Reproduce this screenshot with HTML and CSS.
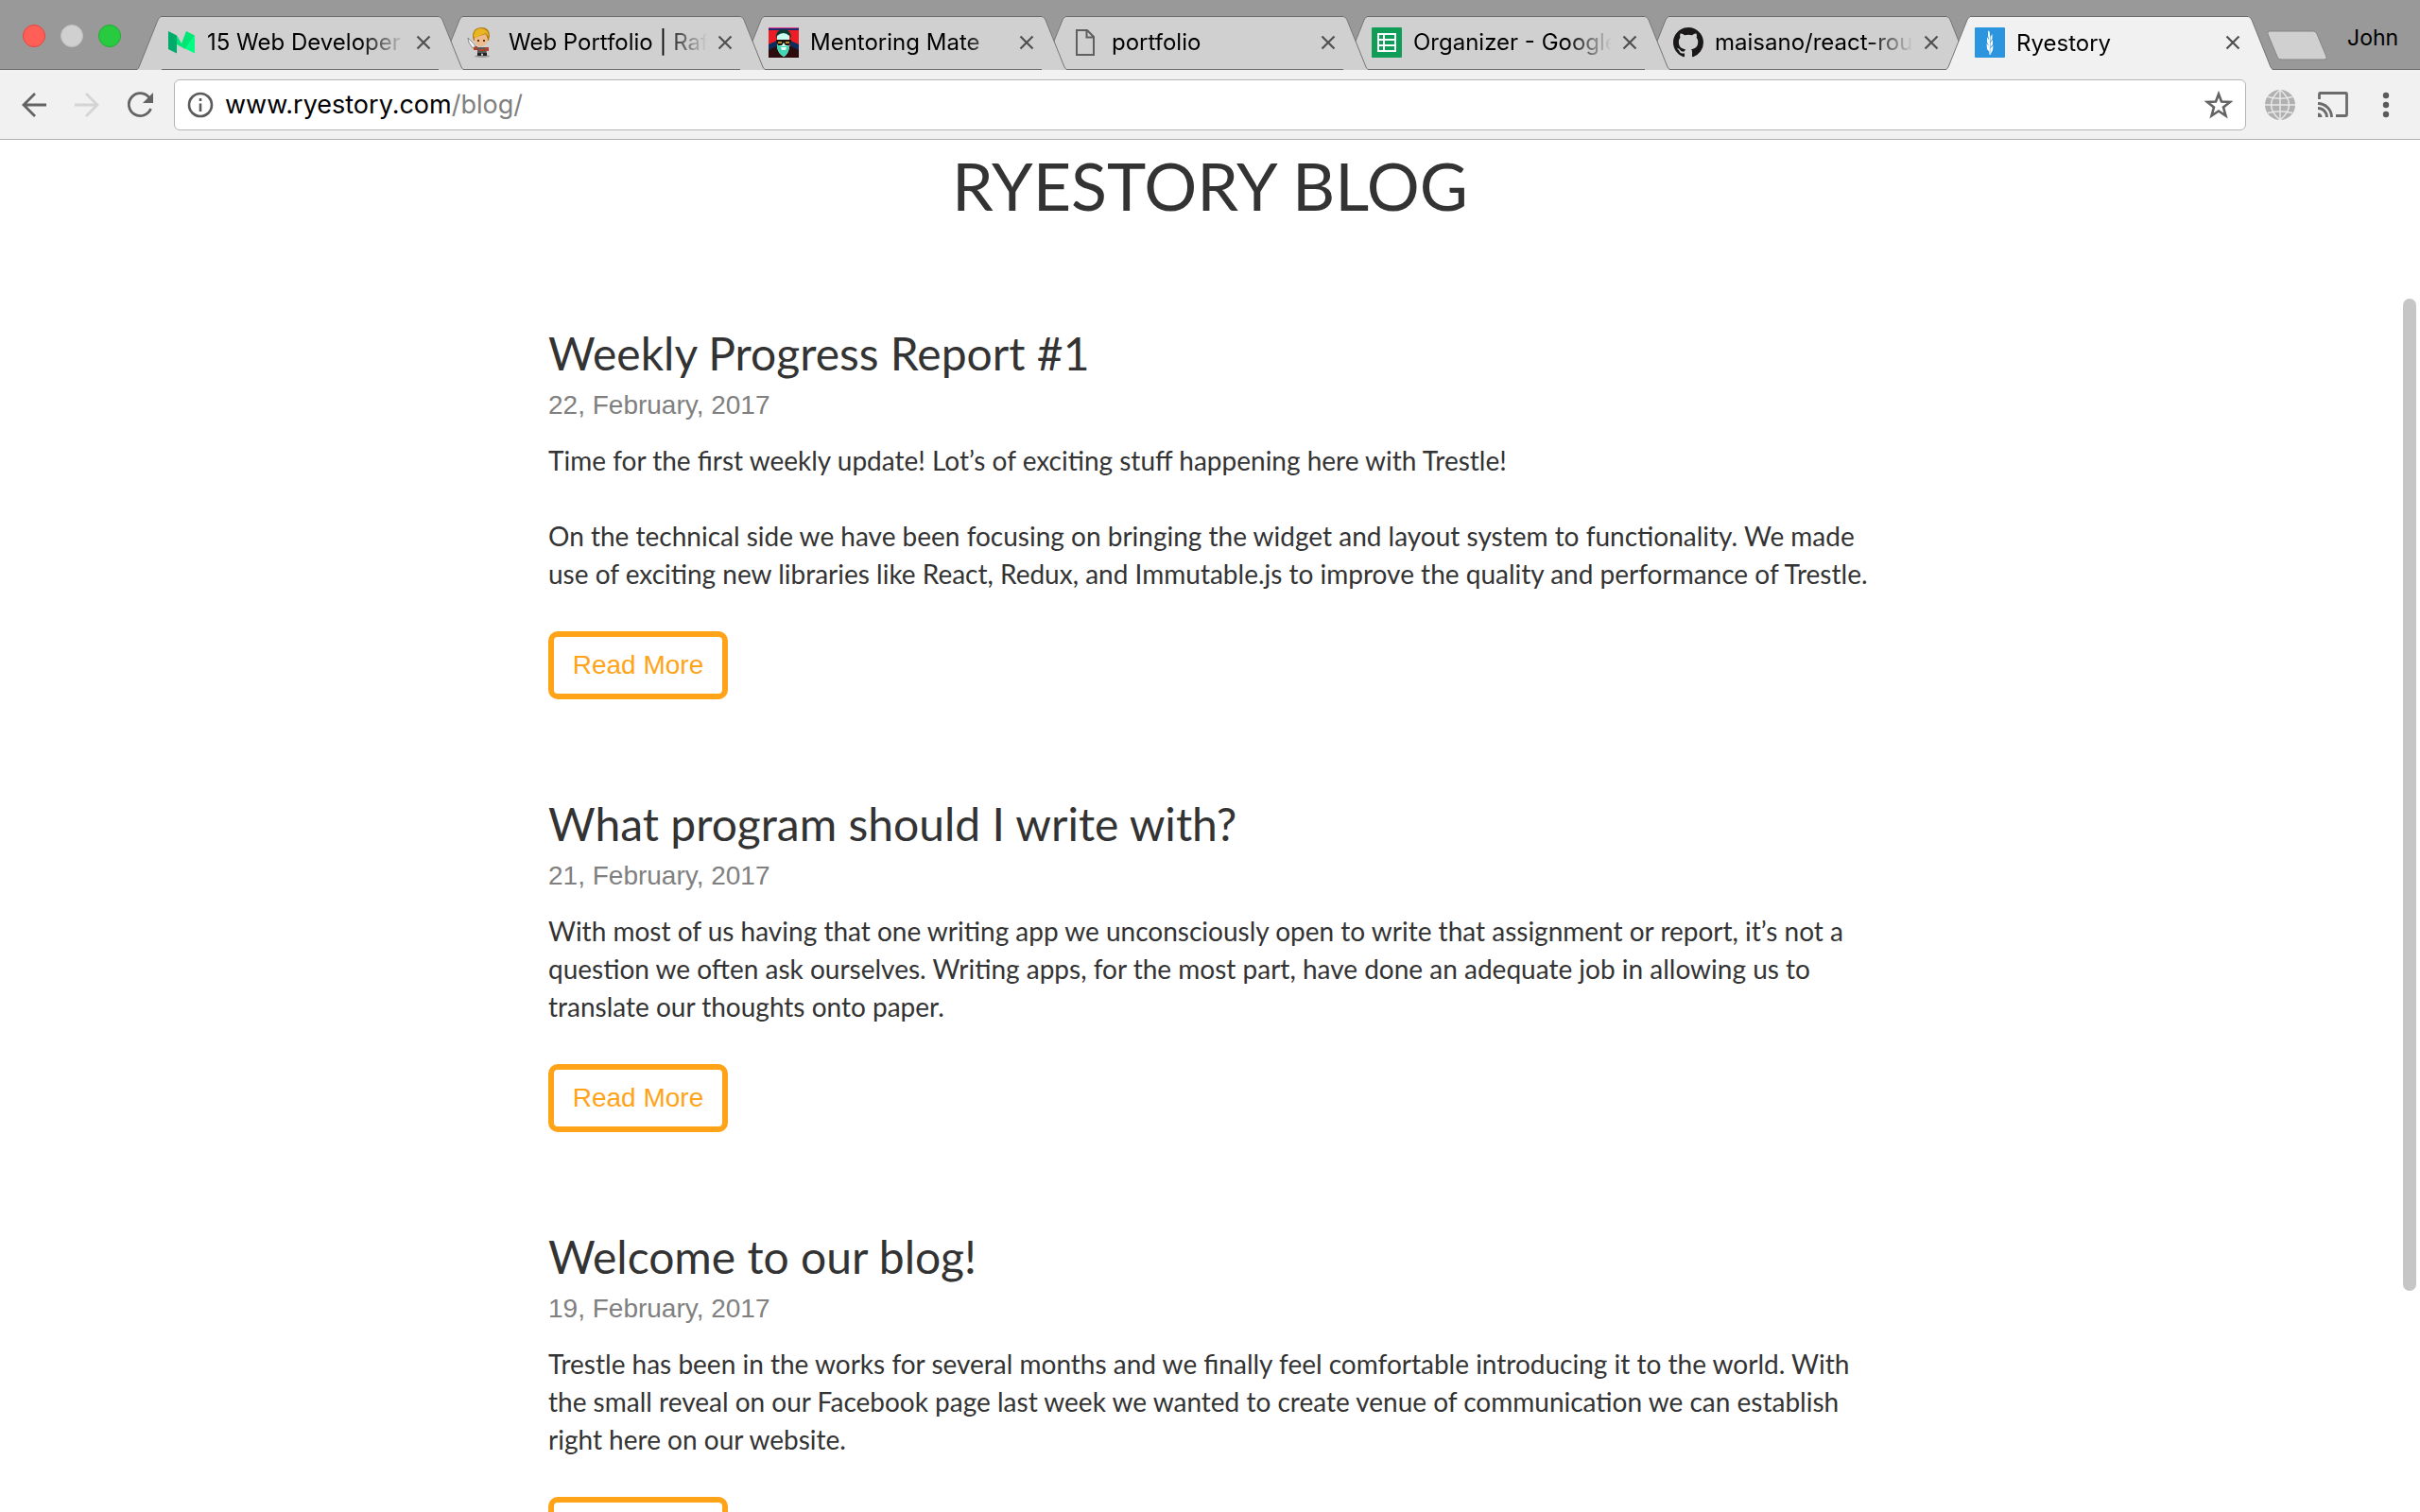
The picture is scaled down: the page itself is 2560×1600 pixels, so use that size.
FILE: index.html
```html
<!DOCTYPE html>
<html lang="en">
<head>
<meta charset="utf-8">
<title>Ryestory</title>
<link rel="stylesheet" href="styles.css">
</head>
<body>
<svg class="defs" aria-hidden="true">
  <defs>
    <symbol id="slant-left" viewBox="0 0 26 57">
      <path class="tab-fill" d="M0 57L2 54L22 4Q24 0 26 0V57Z"/>
      <path class="tab-line" d="M0 56.500L2 54L22 4Q23.500 .5 26 .5"/>
    </symbol>
    <symbol id="slant-right" viewBox="0 0 26 57">
      <path class="tab-fill" d="M26 57L24 54L4 4Q2 0 0 0V57Z"/>
      <path class="tab-line" d="M26 56.500L24 54L4 4Q2.500 .5 0 .5"/>
    </symbol>
    <symbol id="close" viewBox="0 0 16 16">
      <path d="M1.500 1.500L14.500 14.500M14.500 1.500L1.500 14.500" fill="none" stroke="#505050" stroke-width="2.200"/>
    </symbol>
  </defs>
</svg>
<div class="window">
  <header class="strip">
    <div class="lights">
      <button class="light light-close" aria-label="Close window"></button>
      <button class="light light-min" aria-label="Minimise"></button>
      <button class="light light-zoom" aria-label="Zoom"></button>
    </div>
    <nav class="tabs" aria-label="Tabs">
      <div class="tab">
        <svg class="slant"><use href="#slant-left"/></svg>
        <div class="tab-body">
          <svg class="favicon" viewBox="0 0 32 32"><path fill="#00ab6b" d="M3 4L12 8.500V27.500L3 23Z"/><path fill="#00e776" d="M12 8.500L17 17L22 4L31 8.500L21 23L12 18Z"/><path fill="#00ff84" d="M31 8.500V27.500L21 22.500Z"/></svg>
          <span class="tab-title">15 Web Developer</span>
          <button class="tab-close" aria-label="Close tab"><svg><use href="#close"/></svg></button>
        </div>
        <svg class="slant"><use href="#slant-right"/></svg>
      </div>
      <div class="tab">
        <svg class="slant"><use href="#slant-left"/></svg>
        <div class="tab-body">
          <svg class="favicon" viewBox="0 0 32 32"><ellipse cx="16" cy="30.500" rx="8" ry="1.500" fill="#999"/><path fill="#b07a10" d="M6 10Q6 0 15 0Q24 0 24 9L23 14H7Z"/><path fill="#e9b520" d="M7 10Q7 1 15 1Q23 2 23 10L20 6L9 11Z"/><path fill="#edbb8c" d="M8 11L20 7L22 13Q21 20 15 20Q9 20 8 14Z"/><path fill="#5b3520" d="M11 13h2v2h-2zM17 13h2v2h-2z"/><path fill="#5a5a5a" d="M11 21h9l1 7H11z"/><path fill="#b64026" d="M7 20h4v4H7zM19 21h4v4h-4zM13 23h5v2h-5z"/><path fill="#222" d="M11 27h4v3h-4zM17 27h4v3h-4z"/><path fill="#f4f4f4" stroke="#777" stroke-width=".8" d="M1 11L7 17L9 20L6 22L2 16Z"/></svg>
          <span class="tab-title">Web Portfolio | Raf</span>
          <button class="tab-close" aria-label="Close tab"><svg><use href="#close"/></svg></button>
        </div>
        <svg class="slant"><use href="#slant-right"/></svg>
      </div>
      <div class="tab">
        <svg class="slant"><use href="#slant-left"/></svg>
        <div class="tab-body">
          <svg class="favicon" viewBox="0 0 32 32"><path fill="#ee1c24" d="M0 0h32v32H0z"/><path fill="#1e2a6e" d="M0 1h32v2H0z"/><path fill="#e23a8a" d="M0 0h32v1H0z"/><path fill="#0b2c5c" d="M0 18L9 14V26L0 28ZM32 18L23 14V26L32 28Z"/><path fill="#2d0b0c" d="M0 24L8 20H24L32 24V32H0Z"/><path fill="#0c3b33" d="M8 12Q7 2 16 2Q24 2 24 12L22 8H10Z"/><path fill="#c8fff0" d="M9 9Q16 3 22 9V20Q21 29 16 31Q10 28 9 20Z"/><path fill="#3fd6b4" d="M9 18L13 20H19L22 18V22Q20 29 16 31Q11 28 9 22Z"/><path fill="#f4fff9" d="M13 21h6l-1 3h-4z"/><path fill="#1a1410" d="M8 13h16v2l-2 4h-4l-2-3-2 3h-4l-2-4z"/><path fill="#c0892a" d="M10 15h4v2h-4zM18 15h4v2h-4z"/></svg>
          <span class="tab-title">Mentoring Mate</span>
          <button class="tab-close" aria-label="Close tab"><svg><use href="#close"/></svg></button>
        </div>
        <svg class="slant"><use href="#slant-right"/></svg>
      </div>
      <div class="tab">
        <svg class="slant"><use href="#slant-left"/></svg>
        <div class="tab-body">
          <svg class="favicon" viewBox="0 0 32 32"><path d="M7 3H18L25 10V29H7Z M17.500 3V10.500H25" fill="none" stroke="#5f5f5f" stroke-width="2"/></svg>
          <span class="tab-title">portfolio</span>
          <button class="tab-close" aria-label="Close tab"><svg><use href="#close"/></svg></button>
        </div>
        <svg class="slant"><use href="#slant-right"/></svg>
      </div>
      <div class="tab">
        <svg class="slant"><use href="#slant-left"/></svg>
        <div class="tab-body">
          <svg class="favicon" viewBox="0 0 32 32"><rect width="32" height="32" rx="1" fill="#0f9d58"/><path fill="#fff" d="M6 6h20v20H6z"/><path fill="#0f9d58" d="M8 8h4v4H8zM14 8h10v4H14zM8 14h4v4H8zM14 14h10v4H14zM8 20h4v4H8zM14 20h10v4H14z"/></svg>
          <span class="tab-title">Organizer - Google</span>
          <button class="tab-close" aria-label="Close tab"><svg><use href="#close"/></svg></button>
        </div>
        <svg class="slant"><use href="#slant-right"/></svg>
      </div>
      <div class="tab">
        <svg class="slant"><use href="#slant-left"/></svg>
        <div class="tab-body">
          <svg class="favicon" viewBox="0 0 16 16"><path fill="#191717" d="M8 0C3.580 0 0 3.580 0 8c0 3.540 2.290 6.530 5.470 7.590.4.070.55-.17.55-.38 0-.19-.01-.82-.01-1.490-2.010.37-2.530-.49-2.690-.94-.09-.23-.48-.94-.82-1.130-.28-.15-.68-.52-.01-.53.63-.01 1.080.58 1.230.82.72 1.210 1.870.87 2.330.66.07-.52.28-.87.51-1.070-1.780-.2-3.640-.89-3.640-3.950 0-.87.31-1.590.82-2.150-.08-.2-.36-1.020.08-2.120 0 0 .67-.21 2.200.82.64-.18 1.320-.27 2-.27s1.360.09 2 .27c1.530-1.040 2.200-.82 2.200-.82.44 1.100.16 1.920.08 2.120.51.56.82 1.270.82 2.150 0 3.070-1.870 3.750-3.650 3.950.29.25.54.73.54 1.480 0 1.070-.01 1.930-.01 2.200 0 .21.15.46.55.38A8.010 8.010 0 0 0 16 8c0-4.420-3.580-8-8-8z"/></svg>
          <span class="tab-title">maisano/react-rout</span>
          <button class="tab-close" aria-label="Close tab"><svg><use href="#close"/></svg></button>
        </div>
        <svg class="slant"><use href="#slant-right"/></svg>
      </div>
      <div class="tab tab-active">
        <svg class="slant"><use href="#slant-left"/></svg>
        <div class="tab-body">
          <svg class="favicon" viewBox="0 0 32 32"><rect width="32" height="32" rx="1" fill="#2b95e0"/><path fill="#fff" d="M14 3L16 7V13L14 9ZM18.500 7L16.500 10V15L18.500 12ZM13 10L15.500 14V20L13 16ZM19 13L16.500 16V21L19 18ZM12.500 17L15.500 20V26L13 23ZM19.500 19L16.500 22V29L19 24Z"/><path d="M15 4L16 29" stroke="#fff" fill="none"/></svg>
          <span class="tab-title">Ryestory</span>
          <button class="tab-close" aria-label="Close tab"><svg><use href="#close"/></svg></button>
        </div>
        <svg class="slant"><use href="#slant-right"/></svg>
      </div>
    </nav>
    <button class="new-tab" aria-label="New tab"><svg viewBox="0 0 66 32"><path d="M4 1H50Q53 1 54 4L64 28Q65 31 62 31H16Q13 31 12 28L2 4Q1 1 4 1Z" fill="#d0d0d0" stroke="#858585"/></svg></button>
    <button class="profile">John</button>
  </header>
  <div class="toolbar">
    <button class="tool" aria-label="Back"><svg viewBox="0 0 32 32"><path d="M29 16H5M17 4L5 16L17 28" fill="none" stroke="#636363" stroke-width="2.800"/></svg></button>
    <button class="tool" aria-label="Forward"><svg viewBox="0 0 32 32"><path d="M3 16H27M15 4L27 16L15 28" fill="none" stroke="#d4d4d4" stroke-width="2.800"/></svg></button>
    <button class="tool" aria-label="Reload"><svg viewBox="0 0 32 32"><path d="M26 8.500A12 12 0 1 0 27.500 20" fill="none" stroke="#636363" stroke-width="2.800"/><path d="M30 3V14H19Z" fill="#636363"/></svg></button>
    <div class="omnibox">
      <svg class="info" viewBox="0 0 28 28"><circle cx="14" cy="14" r="12" fill="none" stroke="#5a5a5a" stroke-width="2.600"/><path d="M12.700 7h2.600v3h-2.600zM12.700 12.500h2.600v8.500h-2.600z" fill="#5a5a5a"/></svg>
      <a class="url" href="#">www.ryestory.com<span class="path">/blog/</span></a>
      <button class="star" aria-label="Bookmark"><svg viewBox="0 0 30 30"><path d="M15 3.500L18 11.500L27 12L20 17.500L22.500 26.500L15 21.500L7.500 26.500L10 17.500L3 12L12 11.500Z" fill="none" stroke="#636363" stroke-width="2.600"/></svg></button>
    </div>
    <button class="tool" aria-label="Globe extension"><svg viewBox="0 0 32 32"><circle cx="16" cy="16" r="16" fill="#b0b0b0"/><path d="M16 0V32M0 16H32M3 7.500Q16 11 29 7.500M3 24.500Q16 21 29 24.500M16 0Q-3 16 16 32M16 0Q35 16 16 32" fill="none" stroke="#e8e8e8" stroke-width="1.500"/></svg></button>
    <button class="tool" aria-label="Cast"><svg viewBox="0 0 32 32"><path d="M1.500 10V4.500Q1.500 3.500 2.500 3.500H29.500Q30.500 3.500 30.500 4.500V26.500Q30.500 27.500 29.500 27.500H19M0 14.500A14.500 14.500 0 0 1 14.500 29M0 19.500A9.500 9.500 0 0 1 9.500 29" fill="none" stroke="#6b6b6b" stroke-width="2.800"/><path d="M0 24.500A4.500 4.500 0 0 1 4.500 29H0Z" fill="#6b6b6b"/></svg></button>
    <button class="tool" aria-label="Menu"><svg viewBox="0 0 32 32"><g fill="#5a5a5a"><circle cx="16" cy="6" r="3.200"/><circle cx="16" cy="16" r="3.200"/><circle cx="16" cy="26" r="3.200"/></g></svg></button>
  </div>
  <main class="page">
    <h1 class="page-title">RYESTORY BLOG</h1>
    <div class="posts">
      <article class="post">
        <h2 class="post-title">Weekly Progress Report #1</h2>
        <div class="date">22, February, 2017</div>
        <div class="excerpt">
          <p>Time for the first weekly update! Lot’s of exciting stuff happening here with Trestle!</p>
          <p>On the technical side we have been focusing on bringing the widget and layout system to functionality. We made use of exciting new libraries like React, Redux, and Immutable.js to improve the quality and performance of Trestle.</p>
        </div>
        <button class="more">Read More</button>
      </article>
      <article class="post">
        <h2 class="post-title">What program should I write with?</h2>
        <div class="date">21, February, 2017</div>
        <div class="excerpt">
          <p>With most of us having that one writing app we unconsciously open to write that assignment or report, it’s not a question we often ask ourselves. Writing apps, for the most part, have done an adequate job in allowing us to translate our thoughts onto paper.</p>
        </div>
        <button class="more">Read More</button>
      </article>
      <article class="post">
        <h2 class="post-title">Welcome to our blog!</h2>
        <div class="date">19, February, 2017</div>
        <div class="excerpt">
          <p>Trestle has been in the works for several months and we finally feel comfortable introducing it to the world. With the small reveal on our Facebook page last week we wanted to create venue of communication we can establish right here on our website.</p>
        </div>
        <button class="more" aria-label="Read More"></button>
      </article>
    </div>
    <div class="scroll-thumb"></div>
  </main>
</div>
</body>
</html>
```
FILE: styles.css
```css
* { box-sizing: border-box; }
body { margin: 0; background: #fff; }
button { margin: 0; padding: 0; border: 0; background: none; font: inherit; color: inherit; }
svg { display: block; }
.defs { position: absolute; width: 0; height: 0; }

.window {
  display: flex;
  flex-direction: column;
  height: 100vh;
  overflow: hidden;
  font-family: Inter, sans-serif;
}

/* tab strip */
.strip {
  display: flex;
  flex: none;
  height: 74px;
  padding: 17px 23px 0 24px;
  background: #999;
  border-bottom: 1px solid #6b6b6b;
}
.lights { display: flex; gap: 16px; width: 121px; padding-top: 9px; }
.light { width: 24px; height: 24px; border-radius: 50%; border: 1px solid; }
.light-close { background: #ff5f57; border-color: #e2463f; }
.light-min { background: #d0d0d0; border-color: #c0c0c0; }
.light-zoom { background: #28cb40; border-color: #1fae2f; }

.tabs { display: flex; flex: 1; height: 57px; min-width: 0; }
.tab {
  --fill: #d0d0d0;
  display: flex;
  flex: 1 1 0;
  min-width: 0;
  margin-right: -26px;
  position: relative;
  height: 56px;
}
.tab:nth-child(1) { z-index: 7; }
.tab:nth-child(2) { z-index: 6; }
.tab:nth-child(3) { z-index: 5; }
.tab:nth-child(4) { z-index: 4; }
.tab:nth-child(5) { z-index: 3; }
.tab:nth-child(6) { z-index: 2; }
.tab:last-child { margin-right: 0; }
.tab-active { --fill: #f1f1f1; height: 57px; }
.tab-active:last-child { z-index: 8; }
.slant { flex: none; width: 26px; height: 57px; }
.tab-fill { fill: var(--fill); }
.tab-line { fill: none; stroke: #757575; }
.tab-body {
  display: flex;
  flex: 1;
  align-items: center;
  min-width: 0;
  margin: 0 -1px;
  padding: 0 9px 2px 5px;
  background: var(--fill);
  border-top: 1px solid #6b6b6b;
}
.favicon { flex: none; width: 32px; height: 32px; margin-right: 12px; }
.tab-title {
  flex: 1;
  min-width: 0;
  padding-top: 1px;
  overflow: hidden;
  white-space: nowrap;
  font-size: 24px;
  line-height: 32px;
  color: #000;
  -webkit-mask-image: linear-gradient(to left, transparent, #000 48px);
  mask-image: linear-gradient(to left, transparent, #000 48px);
}
.tab-close { width: 16px; height: 16px; margin-left: 11px; }
.tab-close svg { width: 16px; height: 16px; }
.new-tab { width: 66px; height: 32px; margin: 15px 0 0 -7px; }
.new-tab svg { width: 66px; height: 32px; }
.profile { width: 54px; height: 32px; margin: 7px 0 0 20px; font-size: 23px; line-height: 32px; text-align: right; }

/* toolbar */
.toolbar {
  display: flex;
  flex: none;
  align-items: center;
  gap: 24px;
  height: 74px;
  padding: 0 20px;
  background: #f1f1f1;
  border-bottom: 1px solid #b0b0b0;
}
.tool { flex: none; width: 32px; height: 32px; }
.tool svg { width: 32px; height: 32px; }
.omnibox {
  display: flex;
  flex: 1;
  align-items: center;
  height: 54px;
  margin: 0 -4px;
  padding: 0 13px;
  background: #fff;
  border: 1px solid #b4b4b4;
  border-radius: 6px;
}
.info { width: 28px; height: 28px; margin-right: 12px; }
.url { flex: 1; font-size: 27px; line-height: 40px; color: #000; text-decoration: none; }
.path { color: #808080; }
.star, .star svg { width: 30px; height: 30px; }

/* blog */
.page {
  position: relative;
  flex: 1;
  min-height: 0;
  overflow: hidden;
  padding-top: 8px;
  font-family: Lato, sans-serif;
  color: #333;
}
.page-title { margin: 0 0 112px; font-size: 70px; line-height: 80px; font-weight: 400; text-align: center; }
.posts { display: flex; flex-direction: column; gap: 106px; max-width: 1400px; margin: 0 auto; }
.post-title { margin: 0 0 9px; font-size: 48px; line-height: 52px; font-weight: 400; }
.date { margin-bottom: 18px; font-family: "Liberation Sans", sans-serif; font-size: 28px; line-height: 40px; color: #808080; }
.excerpt { display: flex; flex-direction: column; gap: 40px; margin-bottom: 41px; font-size: 28px; line-height: 40px; }
.excerpt p { margin: 0; }
.more {
  display: block;
  width: 190px;
  height: 72px;
  border: 6px solid #ffa319;
  border-radius: 10px;
  font-family: "Liberation Sans", sans-serif;
  font-size: 28px;
  color: #ffa319;
}
.scroll-thumb {
  position: absolute;
  top: 168px;
  right: 4px;
  width: 14px;
  height: 1050px;
  border-radius: 7px;
  background: #c6c6c6;
}
```
